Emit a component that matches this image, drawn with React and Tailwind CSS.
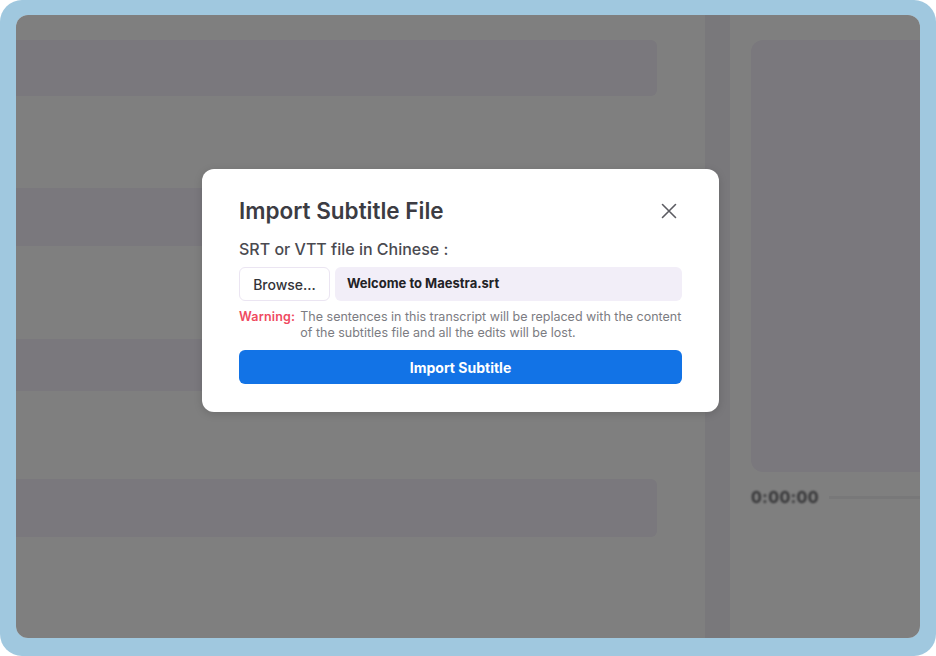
export default function App() {
  return (
    <div className="w-[936px] h-[656px] bg-white font-['Inter',sans-serif]">
      <div className="h-full w-full rounded-[22px] bg-[#a0c8df] pt-[15px] pb-[18px] px-[16px]">
        <div className="relative flex h-full w-full overflow-hidden rounded-[12px] bg-white">
          {/* transcript rows */}
          <div className="flex w-[641px] flex-col">
            <div className="mt-[25px] h-[56px] rounded-r-md bg-[#f4f0fa]" />
            <div className="mt-[92px] h-[58px] rounded-r-md bg-[#f4f0fa]" />
            <div className="mt-[93px] h-[52px] rounded-r-md bg-[#f4f0fa]" />
            <div className="mt-[88px] h-[58px] rounded-r-md bg-[#f4f0fa]" />
          </div>
          <div className="w-[48px]" />
          <div className="w-[25px] bg-[#f2f0f7]" />

          {/* player */}
          <div className="flex-1 pl-[21px] pt-[25px]">
            <div className="h-[432px] rounded-l-[12px] bg-[#f4f0fa]" />
            <div className="mt-[16px] flex items-center gap-[10px]">
              <span className="text-[16px] font-bold leading-[18px] tracking-[0.5px] text-[#626266] blur-[1.2px]">0:00:00</span>
              <div className="h-[3px] flex-1 bg-[#f1f1f3]" />
            </div>
          </div>

          <div className="absolute inset-0 bg-black/50" />

          {/* import dialog */}
          <div className="absolute left-[186px] top-[154px] w-[517px] rounded-[12px] bg-white px-[37px] pt-[28px] pb-[28px] shadow-[0_2px_8px_rgba(0,0,0,0.15)]">
            <div className="flex h-[28px] items-center justify-between">
              <h2 className="text-[22.5px] font-semibold leading-[28px] text-[#3c3c43]">Import Subtitle File</h2>
              <button className="mr-[5px] text-[#5c5c62]" aria-label="Close">
                <svg width="16" height="16" viewBox="0 0 16 16" fill="none" stroke="currentColor" strokeWidth="1.6" strokeLinecap="round">
                  <path d="M1.5 1.5 14.5 14.5M14.5 1.5 1.5 14.5" />
                </svg>
              </button>
            </div>

            <div className="mt-[12px] text-[16px] font-medium leading-[24px] text-[#4a4a50]">SRT or VTT file in Chinese :</div>

            <div className="mt-[6px] flex h-[34px] gap-[5px]">
              <button className="w-[91px] rounded-md border border-[#ebe5f2] bg-white text-[14px] font-medium text-[#333338]">
                Browse...
              </button>
              <div className="flex flex-1 items-center rounded-md bg-[#f2eef8] pl-[12px] text-[13px] font-bold text-[#222226]">
                Welcome to Maestra.srt
              </div>
            </div>

            <div className="mt-[8px] flex gap-[5px] text-[12.5px] leading-[16px]">
              <span className="font-semibold tracking-[0.2px] text-[#ef4a5f]">Warning:</span>
              <p className="text-[#7c7c82]">
                The sentences in this transcript will be replaced with the content of the subtitles file and all the edits will be lost.
              </p>
            </div>

            <button className="mt-[9px] h-[34px] w-full rounded-md bg-[#1273e6] text-[14px] font-bold text-white">
              Import Subtitle
            </button>
          </div>
        </div>
      </div>
    </div>
  );
}
